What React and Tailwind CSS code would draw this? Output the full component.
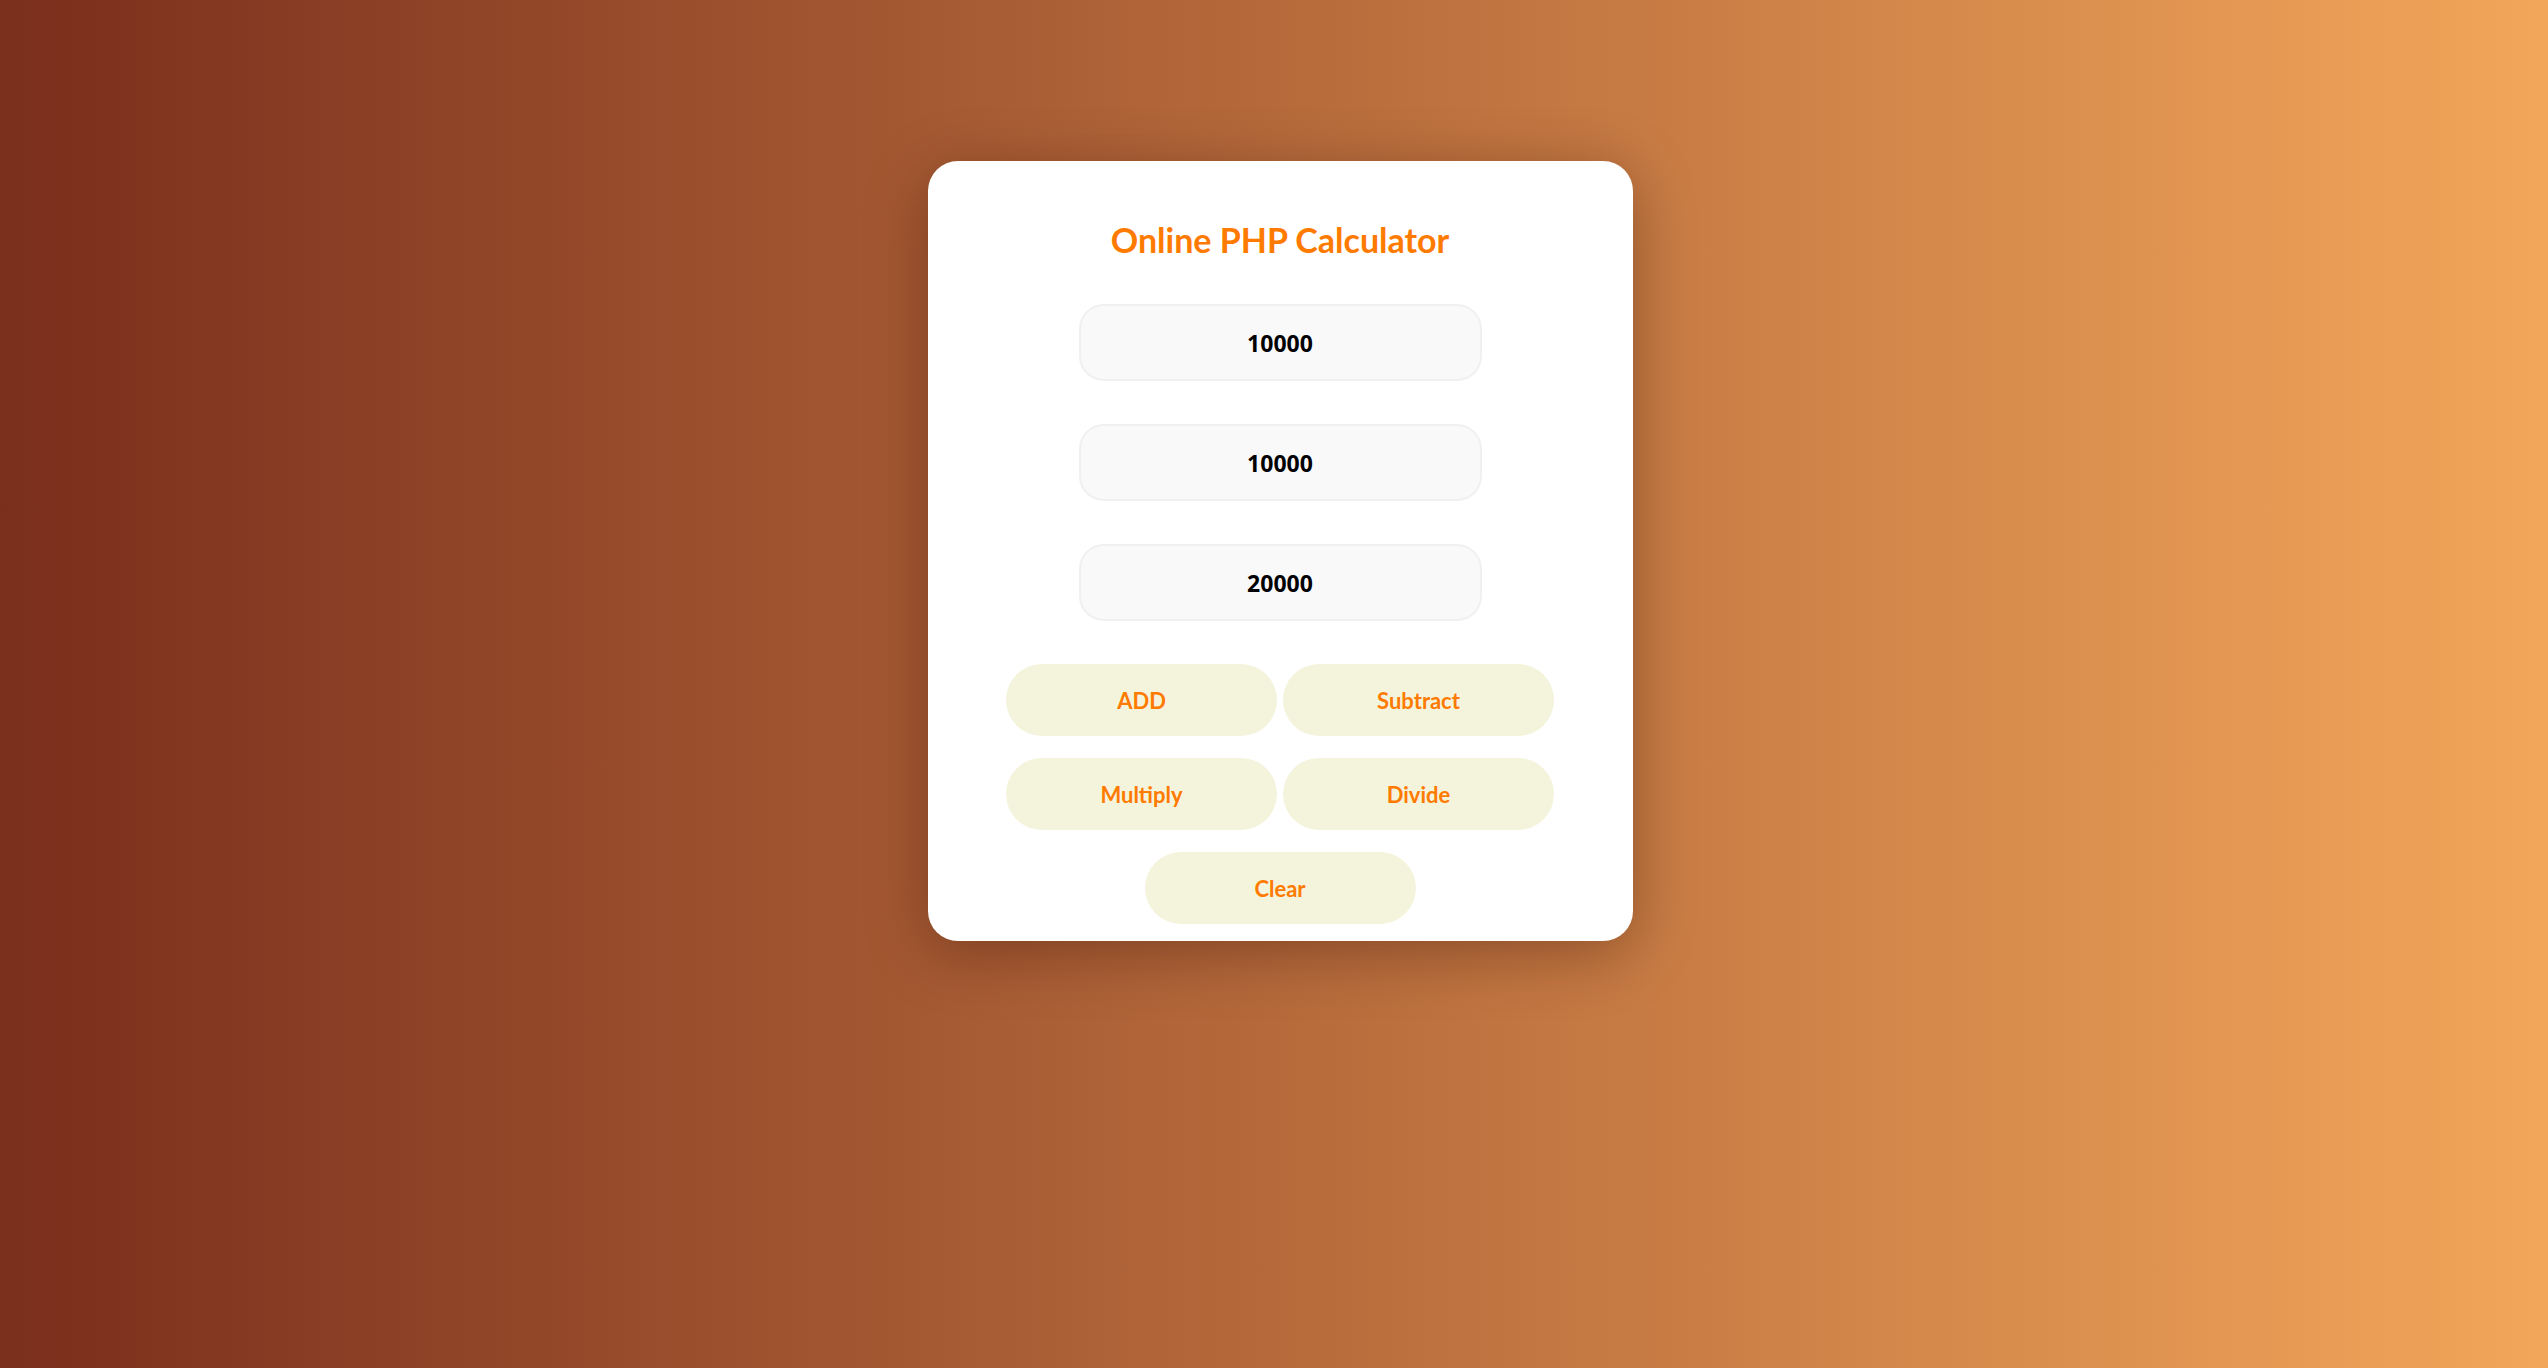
import React from "react";

const btn =
  "h-[72px] w-[271px] rounded-full bg-[#f4f4dc] text-[#ff7b00] text-[22px] font-bold flex items-center justify-center";

const inputCls =
  "w-[403px] h-[77px] rounded-[25px] border-2 border-[#f0f0f0] bg-[#f9f9f9] text-center text-[23px] font-bold text-black outline-none";

export default function App() {
  return (
    <div
      className="w-full min-h-[1368px] bg-[linear-gradient(to_right,#7a2e1c,#f2a65a)] flex justify-center pt-[161px] pl-[12px]"
      style={{ fontFamily: 'Lato, "Noto Sans", sans-serif' }}
    >
      <div className="w-[705px] h-[780px] bg-white rounded-[30px] shadow-[0_12px_60px_rgba(40,10,0,0.35)] flex flex-col items-center pt-[59px] pb-[16px]">
        <h1 className="text-[34px] leading-[40px] font-bold text-[#ff7b00] m-0">
          Online PHP Calculator
        </h1>
        <div
          className="flex flex-col gap-[43px] mt-[44px]"
          style={{ fontFamily: '"Open Sans", "Noto Sans", sans-serif' }}
        >
          <input className={inputCls} defaultValue="10000" />
          <input className={inputCls} defaultValue="10000" />
          <input className={inputCls} defaultValue="20000" />
        </div>
        <div className="grid grid-cols-[271px_271px] gap-x-[6px] gap-y-[22px] mt-[43px]">
          <button className={btn}>ADD</button>
          <button className={btn}>Subtract</button>
          <button className={btn}>Multiply</button>
          <button className={btn}>Divide</button>
        </div>
        <button className={btn + " mt-[22px]"}>Clear</button>
      </div>
    </div>
  );
}
